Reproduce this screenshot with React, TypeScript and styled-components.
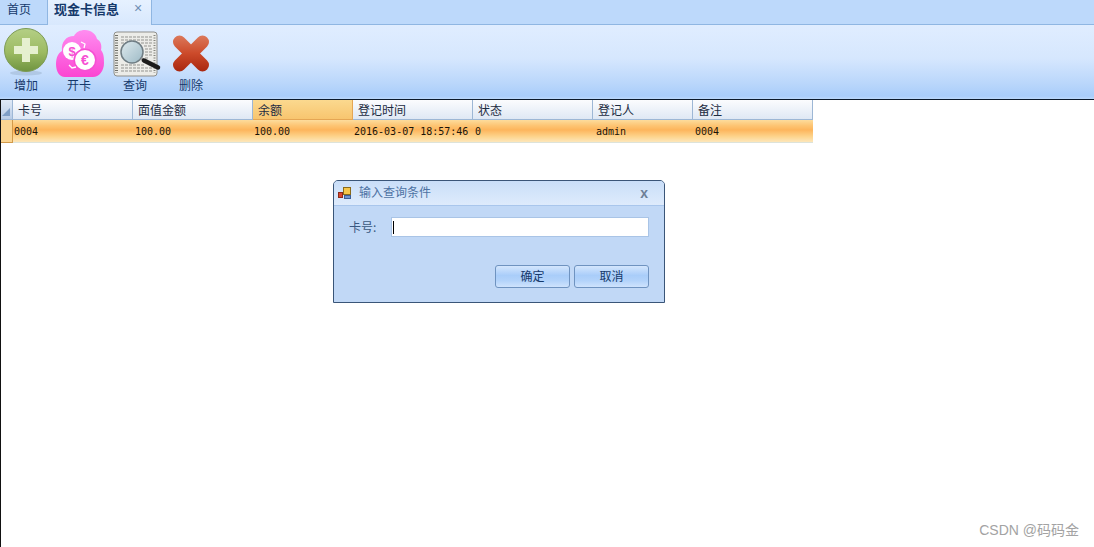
import React from 'react';
import styled, { createGlobalStyle } from 'styled-components';

const GlobalStyle = createGlobalStyle`
  html, body {
    margin: 0;
    padding: 0;
    background: #fff;
  }
  body {
    font-family: "Noto Sans CJK SC", "Liberation Sans", sans-serif;
    font-size: 12px;
  }
`;

const Page = styled.div`
  position: relative;
  width: 1094px;
  height: 547px;
  overflow: hidden;
  display: flex;
  flex-direction: column;
`;

const TabStrip = styled.div`
  height: 24px;
  flex: none;
  display: flex;
  background: #bdd9fb;
  border-bottom: 1px solid #8fb6e2;
`;

const Tab = styled.div<{ $active?: boolean; $width: number }>`
  width: ${(p) => p.$width}px;
  height: ${(p) => (p.$active ? 25 : 24)}px;
  box-sizing: border-box;
  display: flex;
  align-items: center;
  padding: 0 0 ${(p) => (p.$active ? 9 : 7)}px ${(p) => (p.$active ? 6 : 7)}px;
  color: #15396b;
  font-size: ${(p) => (p.$active ? 13 : 12)}px;
  font-weight: ${(p) => (p.$active ? 700 : 400)};
  background: ${(p) => (p.$active ? 'linear-gradient(#e6f1ff, #d8e8fd)' : 'transparent')};
  border-left: ${(p) => (p.$active ? '1px solid #8fb6e2' : 'none')};
  border-right: ${(p) => (p.$active ? '1px solid #8fb6e2' : 'none')};
`;

const TabClose = styled.span`
  margin-left: 15px;
  color: #6f8db3;
  font-family: "Liberation Sans", sans-serif;
  font-size: 14px;
  font-weight: 400;
`;

const Toolbar = styled.div`
  height: 75px;
  flex: none;
  display: flex;
  box-sizing: border-box;
  background: linear-gradient(#e0edff 0%, #d6e7fe 45%, #b9d6fb 80%, #a9cdfa 96%, #bcd8fb 100%);
  border-bottom: 1px solid #0c1a2c;
`;

const ToolButton = styled.div<{ $width: number }>`
  width: ${(p) => p.$width}px;
  display: flex;
  flex-direction: column;
  align-items: center;
  color: #15396b;
`;

const ToolIcon = styled.svg`
  display: block;
  flex: none;
  width: 54px;
  height: 52px;
  margin-top: 2px;
`;

const ToolLabel = styled.span`
  font-size: 12px;
  line-height: 14px;
  margin-top: -1px;
`;

const Content = styled.div`
  flex: 1;
  border-left: 1px solid #111;
`;

const Grid = styled.div`
  width: 812px;
  display: grid;
  grid-template-columns: 12px 120px 120px 100px 120px 120px 100px 120px;
`;

const Corner = styled.div`
  height: 20px;
  box-sizing: border-box;
  position: relative;
  background: linear-gradient(#dfe9f6, #b9cde6);
  border-right: 1px solid #9db7d5;
  border-bottom: 1px solid #9db7d5;
  &::after {
    content: '';
    position: absolute;
    right: 2px;
    bottom: 3px;
    border-style: solid;
    border-width: 0 0 8px 8px;
    border-color: transparent transparent #7f9fc6 transparent;
  }
`;

const HeadCell = styled.div<{ $hot?: boolean }>`
  height: 20px;
  box-sizing: border-box;
  padding: 0 0 1px 5px;
  display: flex;
  align-items: center;
  font-size: 12px;
  color: #1d2c42;
  background: ${(p) =>
    p.$hot ? 'linear-gradient(#fbd98f, #f8c56f)' : 'linear-gradient(#fbfcfe, #dfe8f4)'};
  border-right: 1px solid ${(p) => (p.$hot ? '#e5a654' : '#9db7d5')};
  border-bottom: 1px solid ${(p) => (p.$hot ? '#e5a654' : '#9db7d5')};
`;

const RowMark = styled.div`
  height: 23px;
  box-sizing: border-box;
  background: #fbd592;
  border-right: 1px solid #d29a4a;
  border-bottom: 1px solid #d29a4a;
`;

const RowCell = styled.div<{ $inset: number }>`
  height: 23px;
  box-sizing: border-box;
  padding-left: ${(p) => p.$inset}px;
  display: flex;
  align-items: center;
  font-family: "DejaVu Sans Mono", "Liberation Mono", monospace;
  font-size: 10px;
  color: #1a1408;
  white-space: nowrap;
  background: linear-gradient(#fddc9c 0%, #fdc574 25%, #fdb55c 45%, #fdd48c 75%, #fde7bb 100%);
  border-bottom: 1px solid #dde3da;
`;

const Dialog = styled.div`
  position: absolute;
  left: 333px;
  top: 180px;
  width: 332px;
  height: 123px;
  box-sizing: border-box;
  display: flex;
  flex-direction: column;
  background: #c1d8f6;
  border: 1px solid #3a5578;
  border-radius: 5px 5px 0 0;
`;

const DialogTitle = styled.div`
  height: 25px;
  flex: none;
  box-sizing: border-box;
  display: flex;
  align-items: center;
  padding: 0 16px 1px 4px;
  color: #4d72a3;
  background: linear-gradient(#c9def8, #deebfc);
  border-bottom: 1px solid #a9c6ec;
  border-radius: 4px 4px 0 0;
`;

const TitleText = styled.span`
  margin-left: 7px;
  flex: 1;
  padding-bottom: 2px;
`;

const DialogClose = styled.span`
  font-family: "Liberation Sans", sans-serif;
  font-weight: 700;
  font-size: 14px;
  color: #6d7f96;
  padding-top: 1px;
`;

const FieldRow = styled.div`
  display: flex;
  align-items: center;
  padding: 11px 15px 0 15px;
  color: #3a5880;
`;

const FieldLabel = styled.label`
  width: 42px;
  flex: none;
  padding-bottom: 2px;
`;

const FieldInput = styled.div`
  flex: 1;
  height: 20px;
  box-sizing: border-box;
  background: #fff;
  border: 1px solid #a9c4e6;
  display: flex;
  align-items: center;
  padding-left: 1px;
`;

const Caret = styled.span`
  width: 1px;
  height: 13px;
  background: #000;
`;

const DialogActions = styled.div`
  display: flex;
  justify-content: flex-end;
  gap: 4px;
  padding: 28px 15px 0 0;
`;

const DialogButton = styled.button`
  width: 75px;
  height: 23px;
  padding: 0 0 2px;
  font: inherit;
  color: #15396b;
  background: linear-gradient(#d4e6fd 0%, #a9cdf9 45%, #b3d3fa 70%, #cfe3fd 100%);
  border: 1px solid #6f93c0;
  border-radius: 3px;
`;

const Watermark = styled.div`
  position: absolute;
  right: 15px;
  bottom: 8px;
  font-family: "Liberation Sans", "Noto Sans CJK SC", sans-serif;
  font-size: 14px;
  color: #a3a3a3;
`;

const columns = [
  { title: '卡号', value: '0004', inset: 1 },
  { title: '面值金额', value: '100.00', inset: 2 },
  { title: '余额', value: '100.00', inset: 1, hot: true },
  { title: '登记时间', value: '2016-03-07 18:57:46', inset: 1 },
  { title: '状态', value: '0', inset: 2 },
  { title: '登记人', value: 'admin', inset: 3 },
  { title: '备注', value: '0004', inset: 2 },
];

const AddIcon = () => (
  <ToolIcon viewBox="0 0 54 52">
    <defs>
      <linearGradient id="addFill" x1="0" y1="0" x2="0" y2="1">
        <stop offset="0" stopColor="#b4cf85" />
        <stop offset="0.55" stopColor="#9dbb63" />
        <stop offset="1" stopColor="#6f9440" />
      </linearGradient>
    </defs>
    <ellipse cx="27" cy="46" rx="16" ry="2.5" fill="#8aa0bb" opacity="0.35" />
    <circle cx="27" cy="23" r="21.5" fill="url(#addFill)" stroke="#7d9b55" />
    <path d="M23 11h8v8h8v8h-8v8h-8v-8h-8v-8h8z" fill="#e6f0cf" />
  </ToolIcon>
);

const CardIcon = () => (
  <ToolIcon viewBox="0 0 54 52">
    <defs>
      <linearGradient id="cardFill" x1="0" y1="0" x2="0" y2="1">
        <stop offset="0" stopColor="#ff8cf0" />
        <stop offset="1" stopColor="#fb45d2" />
      </linearGradient>
    </defs>
    <path
      d="M13 50C7 50 4 44 4 37C4 31 6 26 10 24C9 15 14 9 22 9C24 5 28 3 33 3C39 3 44 7 45 12C49 14 50 19 49 23C52 27 52 31 52 36C52 44 47 50 41 50Z"
      fill="url(#cardFill)"
    />
    <circle cx="20" cy="24" r="9" fill="#fff" />
    <circle cx="33" cy="33" r="11.500" fill="#f64fd3" />
    <circle cx="33" cy="33" r="10" fill="#fff" />
    <text x="20" y="29" fontSize="13" fontWeight="700" textAnchor="middle" fill="#f64fd3" fontFamily="Liberation Sans">$</text>
    <text x="33" y="38" fontSize="14" fontWeight="700" textAnchor="middle" fill="#f64fd3" fontFamily="Liberation Sans">€</text>
    <path d="M29 15l4 2-1 4M17 38l3 3 4-1" fill="none" stroke="#fff" strokeWidth="1.3" />
  </ToolIcon>
);

const SearchIcon = () => (
  <ToolIcon viewBox="0 0 54 52">
    <defs>
      <linearGradient id="lens" x1="0" y1="0" x2="1" y2="1">
        <stop offset="0" stopColor="#dfeaee" />
        <stop offset="1" stopColor="#9dbac6" />
      </linearGradient>
    </defs>
    <rect x="6" y="5" width="43" height="44" rx="3" fill="#ecece8" stroke="#8f8f8b" />
    <path d="M8.500 8v38" stroke="#6f6f68" strokeWidth="3" strokeDasharray="1 1.5" />
    <path d="M46.500 8v38" stroke="#85857e" strokeWidth="2" strokeDasharray="1 1.5" />
    <path
      d="M13 10h31M13 13h31M13 16h31M36 19h8M37 22h7M37 25h7M37 28h7M37 31h4M13 38h24M13 41h31M13 44h31"
      stroke="#93938f"
      strokeWidth="1"
      strokeDasharray="3 1"
    />
    <circle cx="24" cy="25" r="11" fill="url(#lens)" stroke="#6f7d84" strokeWidth="1.500" />
    <path d="M33 31.500l2.500 1.500" stroke="#9b9b9b" strokeWidth="3" />
    <path d="M36 33.500l14 7" stroke="#1b1b1b" strokeWidth="4.500" strokeLinecap="round" />
  </ToolIcon>
);

const DeleteIcon = () => (
  <ToolIcon viewBox="0 0 54 52">
    <defs>
      <linearGradient id="delFill" gradientUnits="userSpaceOnUse" x1="0" y1="8" x2="0" y2="45">
        <stop offset="0" stopColor="#dc7a5c" />
        <stop offset="0.5" stopColor="#cc4a2a" />
        <stop offset="1" stopColor="#a8260f" />
      </linearGradient>
    </defs>
    <path
      d="M15.500 15L38.500 38M38.500 15L15.500 38"
      fill="none"
      stroke="url(#delFill)"
      strokeWidth="13"
      strokeLinecap="round"
    />
  </ToolIcon>
);

const WindowIcon = () => (
  <svg width="14" height="14" viewBox="0 0 14 14">
    <rect x="5.500" y="1.500" width="7" height="7" fill="#f5c64a" stroke="#8a6a1a" />
    <rect x="6.500" y="9.500" width="6" height="3" fill="#6f94cf" stroke="#3d5f96" />
    <rect x="0.500" y="6.500" width="4" height="5" fill="#d9482f" stroke="#8c2a1a" />
  </svg>
);

const App = () => (
  <Page>
    <GlobalStyle />
    <TabStrip>
      <Tab $width={47}>首页</Tab>
      <Tab $active $width={105}>
        现金卡信息
        <TabClose>×</TabClose>
      </Tab>
    </TabStrip>
    <Toolbar>
      <ToolButton $width={52}>
        <AddIcon />
        <ToolLabel>增加</ToolLabel>
      </ToolButton>
      <ToolButton $width={54}>
        <CardIcon />
        <ToolLabel>开卡</ToolLabel>
      </ToolButton>
      <ToolButton $width={58}>
        <SearchIcon />
        <ToolLabel>查询</ToolLabel>
      </ToolButton>
      <ToolButton $width={54}>
        <DeleteIcon />
        <ToolLabel>删除</ToolLabel>
      </ToolButton>
    </Toolbar>
    <Content>
      <Grid>
        <Corner />
        {columns.map((c) => (
          <HeadCell key={c.title} $hot={c.hot}>
            {c.title}
          </HeadCell>
        ))}
        <RowMark />
        {columns.map((c) => (
          <RowCell key={c.title} $inset={c.inset}>
            {c.value}
          </RowCell>
        ))}
      </Grid>
    </Content>
    <Dialog>
      <DialogTitle>
        <WindowIcon />
        <TitleText>输入查询条件</TitleText>
        <DialogClose>x</DialogClose>
      </DialogTitle>
      <FieldRow>
        <FieldLabel>卡号:</FieldLabel>
        <FieldInput>
          <Caret />
        </FieldInput>
      </FieldRow>
      <DialogActions>
        <DialogButton>确定</DialogButton>
        <DialogButton>取消</DialogButton>
      </DialogActions>
    </Dialog>
    <Watermark>CSDN @码码金</Watermark>
  </Page>
);

export default App;
